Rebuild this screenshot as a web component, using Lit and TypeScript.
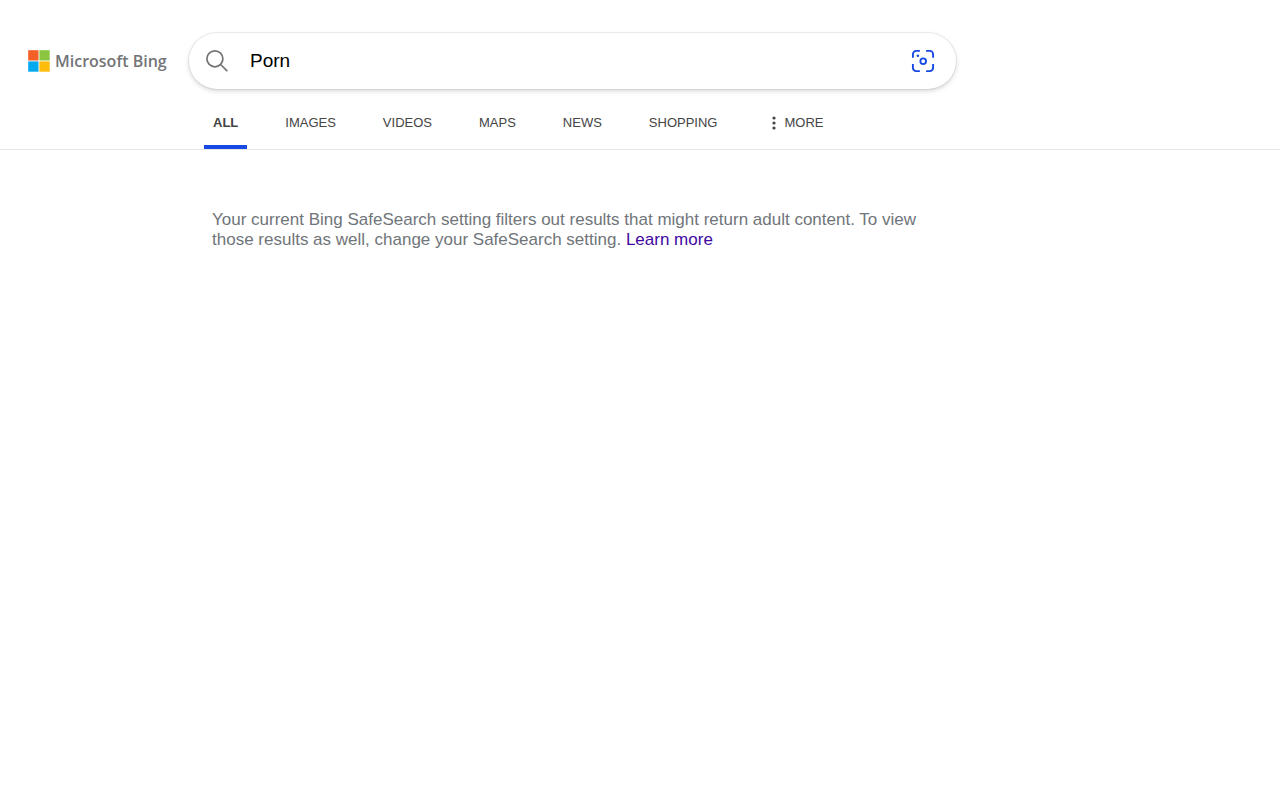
import { LitElement, html, css, svg } from "lit";
import { customElement, property, state } from "lit/decorators.js";
import { classMap } from "lit/directives/class-map.js";

@customElement("bing-logo")
export class BingLogo extends LitElement {
  static styles = css`
    :host {
      display: block;
    }
    .logo {
      display: flex;
      align-items: center;
      gap: 5px;
      color: #737477;
      font: 600 16px/24px "Open Sans", "Noto Sans", sans-serif;
      white-space: nowrap;
      text-decoration: none;
    }
    .mark {
      flex: none;
      display: block;
    }
  `;

  render() {
    return html`
      <a class="logo" href="#">
        <svg class="mark" width="22" height="22" viewBox="0 0 22 22" aria-hidden="true">
          <rect x="0.2" y="0.2" width="10.3" height="10.3" fill="#f35f26" />
          <rect x="11.4" y="0.2" width="10.3" height="10.3" fill="#8bc53f" />
          <rect x="0.2" y="11.4" width="10.3" height="10.3" fill="#05a9f0" />
          <rect x="11.4" y="11.4" width="10.3" height="10.3" fill="#fdbb0c" />
        </svg>
        <span>Microsoft Bing</span>
      </a>
    `;
  }
}

@customElement("search-box")
export class SearchBox extends LitElement {
  @property() query = "";

  static styles = css`
    :host {
      display: block;
    }
    .box {
      display: flex;
      align-items: center;
      box-sizing: border-box;
      height: 56px;
      padding: 0 21px 0 16px;
      border-radius: 28px;
      background: #fff;
      box-shadow: 0 0 0 1px rgba(0, 0, 0, 0.06), 0 2px 5px rgba(0, 0, 0, 0.16);
    }
    .input {
      flex: 1;
      min-width: 0;
      margin: 0 16px 0 21px;
      padding: 0;
      border: 0;
      outline: 0;
      background: none;
      color: #000;
      font: 19px/28px "Liberation Sans", Arial, sans-serif;
    }
    .icon-button {
      flex: none;
      padding: 0;
      border: 0;
      background: none;
      cursor: pointer;
    }
    .icon {
      display: block;
    }
  `;

  render() {
    return html`
      <form class="box" role="search" @submit=${(e: Event) => e.preventDefault()}>
        <button class="icon-button" type="submit" aria-label="Search">
          <svg class="icon" width="24" height="24" viewBox="0 0 24 24" fill="none"
            stroke="#737373" stroke-width="1.7">
            <circle cx="9.9" cy="9.8" r="8" />
            <path d="M15.6 15.5 22.3 22.2" />
          </svg>
        </button>
        <input class="input" type="text" aria-label="Enter your search term" .value=${this.query} />
        <button class="icon-button" type="button" aria-label="Search using an image">
          <svg class="icon" width="24" height="24" viewBox="0 0 24 24" fill="none"
            stroke="#174ae4" stroke-width="1.9">
            <path d="M1.9 8.7V5.2a3.3 3.3 0 0 1 3.3-3.3h3.7M15.1 1.9h3.7a3.3 3.3 0 0 1 3.3 3.3v3.5M22.1 15.1v3.7a3.3 3.3 0 0 1-3.3 3.3h-3.7M8.9 22.1H5.2a3.3 3.3 0 0 1-3.3-3.3v-3.7" />
            <circle cx="12.2" cy="12.2" r="2.8" />
            <circle cx="6.9" cy="6.8" r="1.3" fill="#174ae4" stroke="none" />
          </svg>
        </button>
      </form>
    `;
  }
}

@customElement("scope-nav")
export class ScopeNav extends LitElement {
  @state() private active = "ALL";

  private scopes = ["ALL", "IMAGES", "VIDEOS", "MAPS", "NEWS", "SHOPPING"];

  static styles = css`
    :host {
      display: block;
    }
    .list {
      display: flex;
      gap: 29px;
      margin: 0;
      padding: 0;
      list-style: none;
    }
    .scope {
      display: flex;
      align-items: center;
      box-sizing: border-box;
      height: 48px;
      padding: 0 9px;
      border: 0;
      border-bottom: 4px solid transparent;
      background: none;
      color: #444;
      font: 13px/20px "Liberation Sans", Arial, sans-serif;
      text-decoration: none;
      cursor: pointer;
    }
    .active {
      border-bottom-color: #174ae4;
      font-weight: 700;
    }
    .more {
      gap: 8px;
      margin-left: 8px;
    }
    .dots {
      display: block;
    }
  `;

  render() {
    return html`
      <nav aria-label="Search scope">
        <ul class="list">
          ${this.scopes.map(
            (name) => html`
              <li>
                <a
                  class=${classMap({ scope: true, active: name === this.active })}
                  href="#"
                  @click=${() => (this.active = name)}
                  >${name}</a
                >
              </li>
            `
          )}
          <li>
            <button class="scope more" type="button">
              <svg class="dots" width="4" height="14" viewBox="0 0 4 14" fill="#444" aria-hidden="true">
                ${[2, 7, 12].map((y) => svg`<circle cx="2" cy=${y} r="1.6" />`)}
              </svg>
              MORE
            </button>
          </li>
        </ul>
      </nav>
    `;
  }
}

@customElement("app-root")
export class AppRoot extends LitElement {
  static styles = css`
    :host {
      display: block;
      min-height: 100vh;
      background: #fff;
      font-family: "Liberation Sans", Arial, sans-serif;
    }
    .header {
      display: grid;
      grid-template-columns: 161px minmax(0, 767px);
      align-items: center;
      padding: 33px 28px 0;
      border-bottom: 1px solid #e6e6e6;
    }
    .scopes {
      grid-column: 2;
      margin: 12px 0 0 15px;
    }
    .notice {
      max-width: 710px;
      margin: 0;
      padding: 60px 28px 0 212px;
      color: #70757a;
      font-size: 17px;
      line-height: 20px;
    }
    .link {
      color: #4007a2;
      text-decoration: none;
    }
  `;

  render() {
    return html`
      <header class="header">
        <bing-logo></bing-logo>
        <search-box query="Porn"></search-box>
        <scope-nav class="scopes"></scope-nav>
      </header>
      <main>
        <p class="notice">
          Your current Bing SafeSearch setting filters out results that might return adult content.
          To view those results as well, change your SafeSearch setting.
          <a class="link" href="#">Learn more</a>
        </p>
      </main>
    `;
  }
}
